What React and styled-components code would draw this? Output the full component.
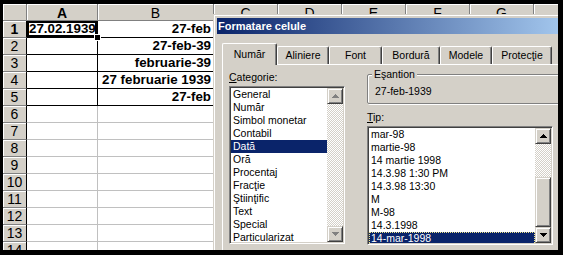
import React from 'react';
import styled, { createGlobalStyle } from 'styled-components';

const GlobalStyle = createGlobalStyle`
  html, body { margin: 0; padding: 0; background: #000; }
  body { font-family: "Liberation Sans", Arial, sans-serif; }
`;

const COLUMNS = [
  { label: 'A', width: 71, active: true },
  { label: 'B', width: 116 },
  { label: 'C', width: 64 },
  { label: 'D', width: 64 },
  { label: 'E', width: 64 },
  { label: 'F', width: 64 },
  { label: 'G', width: 64 },
  { label: 'H', width: 64 },
];

const VALUES = [
  ['27.02.1939', '27-feb'],
  ['', '27-feb-39'],
  ['', 'februarie-39'],
  ['', '27 februarie 1939'],
  ['', '27-feb'],
];

const CATEGORIES = [
  'General', 'Număr', 'Simbol monetar', 'Contabil', 'Dată', 'Oră',
  'Procentaj', 'Fracţie', 'Ştiinţific', 'Text', 'Special', 'Particularizat',
];

const TYPES = [
  'mar-98', 'martie-98', '14 martie 1998', '14.3.98 1:30 PM', '14.3.98 13:30',
  'M', 'M-98', '14.3.1998', '14-mar-1998',
];

const TABS = [
  { label: 'Număr', width: 55, active: true },
  { label: 'Aliniere', width: 52 },
  { label: 'Font', width: 53 },
  { label: 'Bordură', width: 58 },
  { label: 'Modele', width: 52 },
  { label: 'Protecţie', width: 60 },
];

const Arrow = ({ down, disabled }) => (
  <svg width="7" height="4" viewBox="0 0 7 4" shapeRendering="crispEdges"
    style={{ transform: down ? 'rotate(180deg)' : 'none' }}>
    <g fill={disabled ? '#808080' : '#000'}>
      <rect x="3" y="0" width="1" height="1" />
      <rect x="2" y="1" width="3" height="1" />
      <rect x="1" y="2" width="5" height="1" />
      <rect x="0" y="3" width="7" height="1" />
    </g>
  </svg>
);

const App = () => {
  const rows = Array.from({ length: 14 }, (_, i) => i + 1);
  return (
    <>
      <GlobalStyle />
      <Frame>
        <Screen>
          <Sheet>
            <Corner />
            {COLUMNS.map((c) => (
              <ColHeader key={c.label} $active={c.active}>{c.label}</ColHeader>
            ))}
            {rows.map((r) => (
              <React.Fragment key={r}>
                <RowHeader $active={r === 1}>{r}</RowHeader>
                {COLUMNS.map((c, ci) => {
                  const bordered = r <= 5 && ci < 2;
                  const value = bordered ? VALUES[r - 1][ci] : '';
                  return (
                    <Cell key={c.label} $bordered={bordered} $active={r === 1 && ci === 0}>
                      {value}
                      {r === 1 && ci === 0 && <FillHandle />}
                    </Cell>
                  );
                })}
              </React.Fragment>
            ))}
          </Sheet>

          <Dialog>
            <TitleBar>Formatare celule</TitleBar>
            <Body>
              <TabStrip>
                {TABS.map((t) => (
                  <Tab key={t.label} $active={t.active} style={{ width: t.width }}>
                    {t.label}
                  </Tab>
                ))}
              </TabStrip>
              <Panel>
                <Column $width={116}>
                  <Label><u>C</u>ategorie:</Label>
                  <ListBox $height={158}>
                    <Items>
                      {CATEGORIES.map((c) => (
                        <Item key={c} $selected={c === 'Dată'}>{c}</Item>
                      ))}
                    </Items>
                    <ScrollBar>
                      <ScrollButton><Arrow disabled /></ScrollButton>
                      <Track />
                      <ScrollButton><Arrow down disabled /></ScrollButton>
                    </ScrollBar>
                  </ListBox>
                </Column>
                <Column $width={186}>
                  <Group>
                    <Legend>Eşantion</Legend>
                    <Sample>27-feb-1939</Sample>
                  </Group>
                  <Label><u>T</u>ip:</Label>
                  <ListBox $height={119}>
                    <Items>
                      {TYPES.map((t) => (
                        <Item key={t} $selected={t === '14-mar-1998'} $focused>{t}</Item>
                      ))}
                    </Items>
                    <ScrollBar>
                      <ScrollButton><Arrow /></ScrollButton>
                      <Track />
                      <Thumb />
                      <ScrollButton><Arrow down /></ScrollButton>
                    </ScrollBar>
                  </ListBox>
                </Column>
              </Panel>
            </Body>
          </Dialog>
        </Screen>
      </Frame>
    </>
  );
};

const Frame = styled.div`
  width: 563px;
  height: 255px;
  box-sizing: border-box;
  padding: 4px 5px 5px 3px;
  background: #000;
`;

const Screen = styled.div`
  position: relative;
  width: 100%;
  height: 100%;
  overflow: hidden;
  background: #fff;
`;

const Sheet = styled.div`
  display: grid;
  grid-template-columns: 24px ${COLUMNS.map((c) => `${c.width}px`).join(' ')};
  grid-auto-rows: 17px;
  font-family: "Liberation Sans", Arial, sans-serif;
`;

const HeaderBase = styled.div`
  box-sizing: border-box;
  background: #d4d0c8;
  border-right: 1px solid #808080;
  border-bottom: 1px solid #808080;
  box-shadow: inset 1px 1px #fff;
  font-size: 14px;
  line-height: 16px;
  text-align: center;
  color: #000;
  overflow: hidden;
`;

const Corner = styled(HeaderBase)``;

const ColHeader = styled(HeaderBase)`
  padding-top: 2px;
  line-height: 14px;
  font-weight: ${(p) => (p.$active ? 'bold' : 'normal')};
`;

const RowHeader = styled(HeaderBase)`
  font-weight: ${(p) => (p.$active ? 'bold' : 'normal')};
  border-right-color: #000;
`;

const Cell = styled.div`
  position: relative;
  box-sizing: border-box;
  border-right: 1px solid ${(p) => (p.$bordered ? '#000' : '#c0c0c0')};
  border-bottom: 1px solid ${(p) => (p.$bordered ? '#000' : '#c0c0c0')};
  box-shadow: ${(p) => (p.$active ? 'inset 0 0 0 2px #000' : 'none')};
  padding: 0 2px;
  font-size: 13.33px;
  font-weight: bold;
  line-height: 16px;
  text-align: right;
  white-space: nowrap;
  color: #000;
`;

const FillHandle = styled.span`
  position: absolute;
  right: -4px;
  bottom: -4px;
  width: 5px;
  height: 5px;
  background: #000;
  border: 1px solid #fff;
  z-index: 2;
`;

const Dialog = styled.div`
  position: absolute;
  left: 210px;
  top: 10px;
  width: 360px;
  height: 260px;
  box-sizing: border-box;
  padding: 4px;
  background: #d4d0c8;
  box-shadow: inset 1px 1px #d4d0c8, inset 2px 2px #fff;
  font-family: "Liberation Sans", Arial, sans-serif;
  font-size: 10.5px;
  color: #000;
`;

const TitleBar = styled.div`
  height: 16px;
  padding-left: 1px;
  background: linear-gradient(to right, #0a246a, #a6caf0);
  color: #fff;
  font-size: 11px;
  font-weight: bold;
  line-height: 16px;
`;

const Body = styled.div`
  padding: 9px 0 0 5px;
`;

const TabStrip = styled.div`
  display: flex;
  align-items: flex-end;
  height: 21px;
  position: relative;
  z-index: 1;
`;

const Tab = styled.div`
  box-sizing: border-box;
  height: ${(p) => (p.$active ? '22px' : '18px')};
  margin-bottom: ${(p) => (p.$active ? '-1px' : '0')};
  padding-top: ${(p) => (p.$active ? '4px' : '2px')};
  text-align: center;
  background: #d4d0c8;
  border-top: 1px solid #fff;
  border-left: 1px solid #fff;
  border-right: 1px solid #404040;
  border-radius: 2px 2px 0 0;
  box-shadow: inset -1px 0 #808080;
  line-height: 13px;
`;

const Panel = styled.div`
  display: flex;
  gap: 22px;
  height: 200px;
  box-sizing: border-box;
  padding: 6px 0 0 6px;
  border-top: 1px solid #fff;
  border-left: 1px solid #fff;
`;

const Column = styled.div`
  display: flex;
  flex-direction: column;
  width: ${(p) => p.$width}px;
`;

const Label = styled.div`
  height: 13px;
  line-height: 13px;
  margin-bottom: 2px;
`;

const ListBox = styled.div`
  display: flex;
  height: ${(p) => p.$height}px;
  box-sizing: border-box;
  background: #fff;
  border-top: 1px solid #808080;
  border-left: 1px solid #808080;
  border-right: 1px solid #fff;
  border-bottom: 1px solid #fff;
  box-shadow: inset 1px 1px #404040, inset -1px -1px #d4d0c8;
  padding: 1px;
`;

const Items = styled.div`
  flex: 1;
  overflow: hidden;
`;

const Item = styled.div`
  height: 13px;
  line-height: 12px;
  padding-left: 2px;
  white-space: nowrap;
  background: ${(p) => (p.$selected ? '#0a246a' : 'transparent')};
  color: ${(p) => (p.$selected ? '#fff' : '#000')};
  outline: ${(p) => (p.$selected && p.$focused ? '1px dotted #f0e68c' : 'none')};
  outline-offset: -1px;
`;

const ScrollBar = styled.div`
  display: flex;
  flex-direction: column;
  width: 16px;
`;

const ScrollButton = styled.div`
  display: flex;
  align-items: center;
  justify-content: center;
  width: 16px;
  height: 16px;
  box-sizing: border-box;
  background: #d4d0c8;
  border-top: 1px solid #d4d0c8;
  border-left: 1px solid #d4d0c8;
  border-right: 1px solid #404040;
  border-bottom: 1px solid #404040;
  box-shadow: inset 1px 1px #fff, inset -1px -1px #808080;
`;

const Track = styled.div`
  flex: 1;
  background-image: repeating-conic-gradient(#fff 0% 25%, #d4d0c8 0% 50%);
  background-size: 2px 2px;
`;

const Thumb = styled(ScrollButton)`
  height: 50px;
`;

const Group = styled.div`
  box-sizing: border-box;
  width: 220px;
  height: 30px;
  margin-top: 3px;
  margin-bottom: 7px;
  padding-left: 7px;
  border: 1px solid #808080;
  box-shadow: inset 1px 1px #fff, 1px 1px #fff;
  border-radius: 2px;
`;

const Legend = styled.div`
  width: fit-content;
  margin-top: -7px;
  margin-left: -3px;
  padding: 0 2px;
  height: 13px;
  line-height: 13px;
  background: #d4d0c8;
`;

const Sample = styled.div`
  margin-top: 4px;
  line-height: 13px;
`;

export default App;
